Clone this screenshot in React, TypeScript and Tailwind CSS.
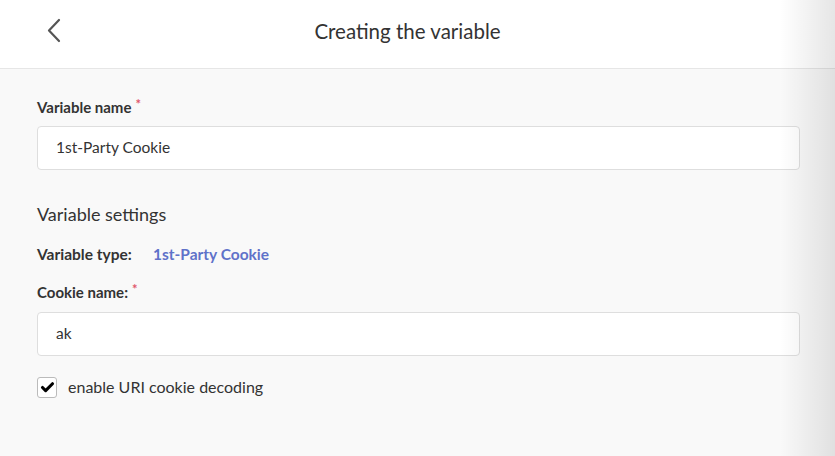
import { Check } from "lucide-react";

const font = { fontFamily: '"Lato", "Noto Sans", sans-serif' };

function Label({ text, required }: { text: string; required?: boolean }) {
  return (
    <div className="flex h-5 items-start text-[15px] font-bold leading-5 text-[#333]">
      <span>{text}</span>
      {required && <span className="ml-[4px] -mt-[3px] text-[13px] text-[#e0566b]">*</span>}
    </div>
  );
}

function TextField({ value }: { value: string }) {
  return (
    <div className="flex h-[44px] items-center rounded-[4px] border border-[#dedede] bg-white px-[18px] text-[15.5px] text-[#333]">
      {value}
    </div>
  );
}

export default function App() {
  return (
    <div className="relative h-[456px] w-full overflow-hidden bg-[#f9f9f9]" style={font}>
      {/* Header */}
      <div className="relative flex h-[69px] items-center justify-center border-b border-[#e6e6e6] bg-white pr-[20px]">
        <button className="absolute left-[44px] top-[17px] flex h-[26px] w-[20px] items-center justify-center">
          <svg width="16" height="25" viewBox="0 0 16 25" fill="none">
            <path d="M13 2 L3 12.5 L13 23" stroke="#555" strokeWidth="2.2" strokeLinecap="round" strokeLinejoin="round" />
          </svg>
        </button>
        <h1 className="mb-[5px] text-[20.5px] text-[#333]">Creating the variable</h1>
      </div>

      {/* Form */}
      <div className="pl-[37px] pr-[35px] pt-[28px]">
        <Label text="Variable name" required />
        <div className="mt-[9px]">
          <TextField value="1st-Party Cookie" />
        </div>

        <h2 className="mt-[32px] h-6 text-[18px] leading-6 text-[#333]">Variable settings</h2>

        <div className="mt-[18px] flex h-5 items-center text-[15.5px] font-bold leading-5">
          <span className="w-[116px] text-[#333]">Variable type:</span>
          <span className="text-[#5f72c9]">1st-Party Cookie</span>
        </div>

        <div className="mt-[18px]">
          <Label text="Cookie name:" required />
        </div>
        <div className="mt-[10px]">
          <TextField value="ak" />
        </div>

        <div className="mt-[19px] flex items-center gap-[11px]">
          <div className="flex h-[21px] w-[20px] items-center justify-center rounded-[3px] border border-[#bbb] bg-white">
            <Check className="h-[15px] w-[15px] text-black" strokeWidth={5} />
          </div>
          <span className="text-[16px] text-[#333]">enable URI cookie decoding</span>
        </div>
      </div>

      {/* Right edge shadow of overlaying panel */}
      <div className="pointer-events-none absolute right-0 top-0 h-full w-[55px] bg-linear-to-r from-transparent to-black/10" />
    </div>
  );
}
